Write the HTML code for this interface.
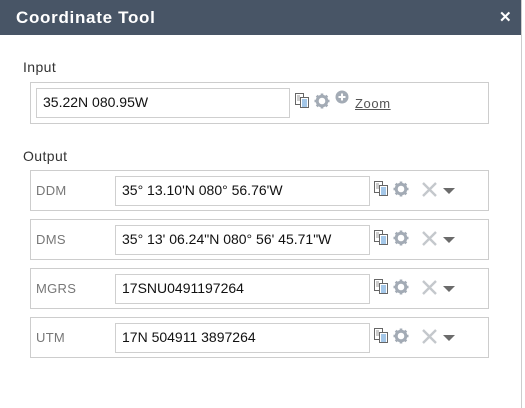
<!DOCTYPE html>
<html><head><meta charset="utf-8"><style>
*{box-sizing:border-box;margin:0;padding:0}
body{width:525px;height:408px;background:#fff;font-family:"Liberation Sans",Arial,sans-serif;position:relative;overflow:hidden}
.hdr{position:absolute;left:0;top:0;width:521px;height:35px;background:#485566;color:#fff;font-weight:bold;font-size:17px}
.hdr .t{position:absolute;left:16px;top:8px;letter-spacing:0.7px}
.hdr .x{position:absolute;left:499px;top:8px;font-size:15px}
.rb{position:absolute;left:521px;top:0;width:4px;height:408px;background:#fff;border-left:1px solid #ccc}
.lbl{position:absolute;left:23px;font-size:14px;color:#333;letter-spacing:0.4px}
.box{position:absolute;left:30px;width:459px;border:1px solid #cdcdcd}
.fld{position:absolute;border:1px solid #cfcfcf;font-size:14px;color:#111;padding:5px 0 0 6px;height:30px}
.nm{position:absolute;left:36px;font-size:13px;color:#777;letter-spacing:0.3px}
svg{position:absolute}
.zoom{position:absolute;left:355px;top:96px;font-size:13px;color:#555;text-decoration:underline;letter-spacing:0.6px}
</style></head><body>
<div class="hdr"><span class="t">Coordinate Tool</span><span class="x">✕</span></div>
<div class="rb"></div>
<div class="lbl" style="top:59px">Input</div>
<div class="box" style="top:82px;height:42px"></div>
<div class="fld" style="left:36px;top:88px;width:254px">35.22N 080.95W</div>
<svg width="0" height="0"><defs>
<g id="cp"><rect x="0.5" y="0.5" width="8" height="11" fill="#fff" stroke="#666"/><rect x="5.5" y="4.5" width="8" height="10" fill="#fff" stroke="#666"/><path d="M7 7h5M7 9h5M7 11h5M7 13h5" stroke="#4a8fd0"/><path d="M2 3h3M2 5h3M2 7h3" stroke="#999"/></g>
<g id="gr"><circle cx="8" cy="8" r="4.8" fill="none" stroke="#a3abb5" stroke-width="3"/><path d="M8 0.5v3.5M8 12v3.5M0.5 8h3.5M12 8h3.5M2.7 2.7l2.6 2.6M10.7 10.7l2.6 2.6M13.3 2.7l-2.6 2.6M5.3 10.7l-2.6 2.6" stroke="#a3abb5" stroke-width="2.6"/></g>
<g id="xx"><path d="M1 1l13 13M14 1L1 14" stroke="#c4c8cc" stroke-width="2.4"/></g>
</defs></svg>
<svg style="left:295px;top:93px" width="15" height="16"><use href="#cp"/></svg>
<svg style="left:314px;top:93px" width="16" height="16"><use href="#gr"/></svg>
<svg style="left:335px;top:90px" width="14" height="14"><circle cx="7" cy="7" r="6.5" fill="#a3abb5"/><path d="M7 3.5v7M3.5 7h7" stroke="#fff" stroke-width="2"/></svg>
<span class="zoom">Zoom</span>
<div class="lbl" style="top:148px">Output</div>

<div class="box" style="top:170px;height:41px"></div>
<div class="nm" style="top:183px">DDM</div>
<div class="fld" style="left:115px;top:176px;width:255px">35° 13.10'N 080° 56.76'W</div>
<svg style="left:374px;top:181px" width="15" height="16"><use href="#cp"/></svg>
<svg style="left:393px;top:181px" width="16" height="16"><use href="#gr"/></svg>
<svg style="left:422px;top:182px" width="16" height="16"><use href="#xx"/></svg>
<svg style="left:443px;top:188px" width="13" height="6"><path d="M0 0h12L6 6z" fill="#6b6b6b"/></svg>

<div class="box" style="top:219px;height:41px"></div>
<div class="nm" style="top:232px">DMS</div>
<div class="fld" style="left:115px;top:225px;width:255px">35° 13' 06.24"N 080° 56' 45.71"W</div>
<svg style="left:374px;top:230px" width="15" height="16"><use href="#cp"/></svg>
<svg style="left:393px;top:230px" width="16" height="16"><use href="#gr"/></svg>
<svg style="left:422px;top:231px" width="16" height="16"><use href="#xx"/></svg>
<svg style="left:443px;top:237px" width="13" height="6"><path d="M0 0h12L6 6z" fill="#6b6b6b"/></svg>

<div class="box" style="top:268px;height:41px"></div>
<div class="nm" style="top:281px">MGRS</div>
<div class="fld" style="left:115px;top:274px;width:255px">17SNU0491197264</div>
<svg style="left:374px;top:279px" width="15" height="16"><use href="#cp"/></svg>
<svg style="left:393px;top:279px" width="16" height="16"><use href="#gr"/></svg>
<svg style="left:422px;top:280px" width="16" height="16"><use href="#xx"/></svg>
<svg style="left:443px;top:286px" width="13" height="6"><path d="M0 0h12L6 6z" fill="#6b6b6b"/></svg>

<div class="box" style="top:317px;height:41px"></div>
<div class="nm" style="top:330px">UTM</div>
<div class="fld" style="left:115px;top:323px;width:255px">17N 504911 3897264</div>
<svg style="left:374px;top:328px" width="15" height="16"><use href="#cp"/></svg>
<svg style="left:393px;top:328px" width="16" height="16"><use href="#gr"/></svg>
<svg style="left:422px;top:329px" width="16" height="16"><use href="#xx"/></svg>
<svg style="left:443px;top:335px" width="13" height="6"><path d="M0 0h12L6 6z" fill="#6b6b6b"/></svg>
</body></html>
